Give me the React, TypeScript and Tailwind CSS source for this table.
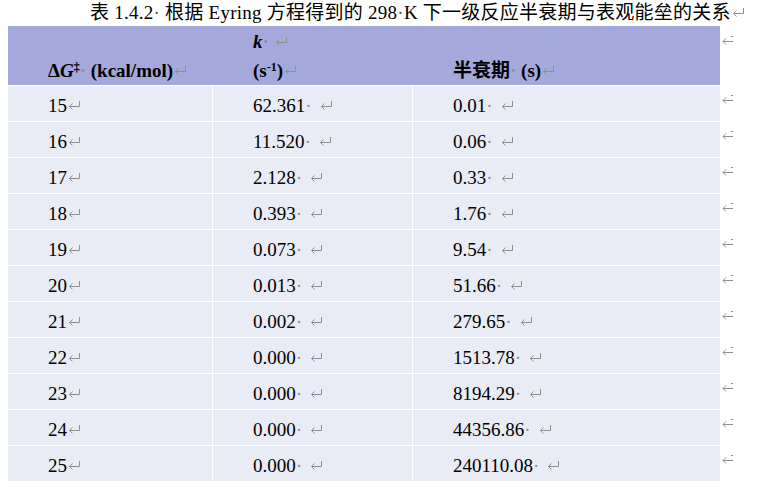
import React from "react";

const rows = [
  ["15", "62.361", "0.01"],
  ["16", "11.520", "0.06"],
  ["17", "2.128", "0.33"],
  ["18", "0.393", "1.76"],
  ["19", "0.073", "9.54"],
  ["20", "0.013", "51.66"],
  ["21", "0.002", "279.65"],
  ["22", "0.000", "1513.78"],
  ["23", "0.000", "8194.29"],
  ["24", "0.000", "44356.86"],
  ["25", "0.000", "240110.08"],
];

// paragraph mark shown by Word
const Ret = ({ gap = false }: { gap?: boolean }) => (
  <svg
    width="13"
    height="12"
    viewBox="0 0 13 12"
    className={`inline-block align-baseline ${gap ? "ml-[8px]" : "ml-[1px]"}`}
    fill="none"
    stroke="#8f8f8f"
    strokeWidth="1"
  >
    <path d="M11.5 1 V6.5 H1.5" />
    <path d="M4.5 3.5 L1.5 6.5 L4.5 9.5" />
  </svg>
);

const Dot = () => <span className="text-[#8f8f8f]">·</span>;

// end-of-row mark to the right of the table
const RowEnd = () => (
  <div className="ml-[2px] pt-[10px]">
    <svg width="12" height="10" viewBox="0 0 12 10" fill="none" stroke="#8f8f8f" strokeWidth="1">
      <path d="M11 5.5 H1" />
      <path d="M4 2.5 L1 5.5 L4 8.5" />
      <path d="M9 0.5 H11" />
    </svg>
  </div>
);

const App: React.FC = () => {
  return (
    <div className="w-[757px] h-[490px] bg-white text-black text-[19px] font-['Liberation_Serif','Noto_Sans_CJK_SC',serif] overflow-hidden">
      <div className="h-[26px] leading-[26px] pl-[90px] tracking-[0.25px] whitespace-nowrap">
        表 1.4.2<span className="text-[#555]">·</span> 根据 Eyring 方程得到的 298<span className="text-[#555]">·</span>K
        下一级反应半衰期与表观能垒的关系
        <Ret />
      </div>

      <div className="pl-[8px]">
        {/* header */}
        <div className="flex">
          <div className="flex w-[712px] h-[59px] pt-[1px] bg-[#a5a8da] font-bold leading-[29px]">
            <div className="w-[204px] pl-[40px]">
              <div className="h-[29px]" />
              <div className="whitespace-nowrap">
                Δ<i>G</i>
                <sup className="text-[12px]">‡</sup>
                <Dot /> (kcal/mol)
                <Ret />
              </div>
            </div>
            <div className="w-[200px] pl-[41px]">
              <div className="whitespace-nowrap">
                <i>k</i>
                <Dot /> <Ret />
              </div>
              <div className="whitespace-nowrap">
                (s<sup className="text-[12px]">-1</sup>)
                <Ret />
              </div>
            </div>
            <div className="w-[308px] pl-[41px]">
              <div className="h-[29px]" />
              <div className="whitespace-nowrap">
                半衰期<Dot /> (s)
                <Ret />
              </div>
            </div>
          </div>
          <RowEnd />
        </div>

        {/* body */}
        {rows.map(([g, k, t]) => (
          <div key={g} className="flex">
            <div className="flex w-[712px] h-[36px] border-t border-white bg-[#e9ebf5] leading-[29px]">
              <div className="w-[204px] pl-[40px] pt-[5px]">
                {g}
                <Ret />
              </div>
              <div className="w-[200px] border-l border-white pl-[40px] pt-[5px] whitespace-nowrap">
                {k}
                <Dot />
                <Ret gap />
              </div>
              <div className="w-[308px] border-l border-white pl-[40px] pt-[5px] whitespace-nowrap">
                {t}
                <Dot />
                <Ret gap />
              </div>
            </div>
            <RowEnd />
          </div>
        ))}
      </div>
    </div>
  );
};

export default App;
